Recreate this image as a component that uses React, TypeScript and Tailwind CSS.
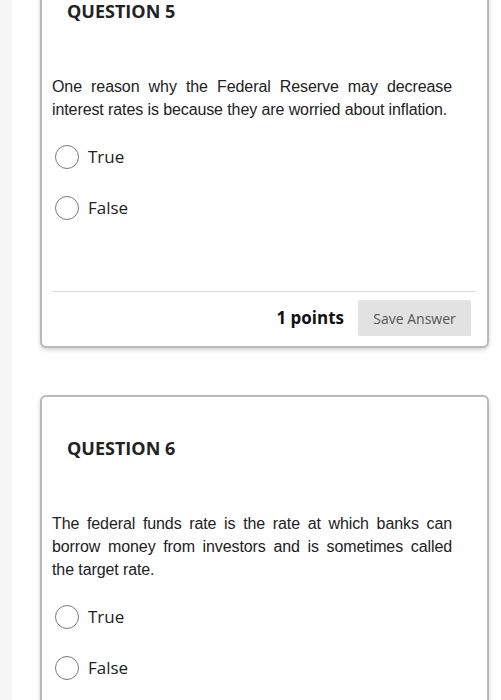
import React from "react";

const Radio = ({ label }: { label: string }) => (
  <div className="flex items-center h-6 pl-[3px]">
    <div className="w-6 h-6 rounded-full border-[1.5px] border-[#7a7a7a] bg-white shrink-0" />
    <span className="ml-[9px] text-[17px] leading-6 text-[#222]">{label}</span>
  </div>
);

const Card = ({
  num,
  text,
  className,
  footer,
}: {
  num: number;
  text: string;
  className?: string;
  footer?: boolean;
}) => (
  <div
    className={
      "w-[449px] border-2 border-[#b9b9b9] rounded-[6px] bg-white shadow-[0_2px_4px_rgba(0,0,0,0.18)] pt-[39px] pb-[10px] px-[10px] " +
      (className ?? "")
    }
  >
    <h2 className="ml-[15px] text-[18px] leading-6 font-bold text-[#222]">QUESTION {num}</h2>
    <p
      className="mt-[52px] w-[400px] text-[16px] leading-[23px] tracking-[-0.1px] text-[#222] text-justify"
      style={{ fontFamily: '"Liberation Sans", Arial, sans-serif' }}
    >
      {text}
    </p>
    <div className="mt-[24px] flex flex-col gap-[27px]">
      <Radio label="True" />
      <Radio label="False" />
    </div>
    {footer && (
      <>
        <div className="mt-[71px] h-px bg-[#dcdcdc] mr-[1px]" />
        <div className="mt-[8px] flex items-center justify-end pr-[6px]">
          <span className="text-[17px] font-bold text-[#111] leading-6">1 points</span>
          <div className="ml-[14px] w-[113px] h-9 bg-[#e2e2e2] rounded-[2px] flex items-center justify-center text-[14px] text-[#555]">
            Save Answer
          </div>
        </div>
      </>
    )}
  </div>
);

export default function App() {
  return (
    <div
      className="flex h-[700px] overflow-hidden bg-white"
      style={{ fontFamily: '"Open Sans", "Noto Sans", sans-serif' }}
    >
      <div className="w-[12px] shrink-0 bg-[#f6f6f6]" />
      <div className="pl-[28px] flex flex-col">
        <Card
          num={5}
          className="-mt-[42px]"
          footer
          text="One reason why the Federal Reserve may decrease interest rates is because they are worried about inflation."
        />
        <Card
          num={6}
          className="mt-[47px] pb-[80px]"
          text="The federal funds rate is the rate at which banks can borrow money from investors and is sometimes called the target rate."
        />
      </div>
    </div>
  );
}
